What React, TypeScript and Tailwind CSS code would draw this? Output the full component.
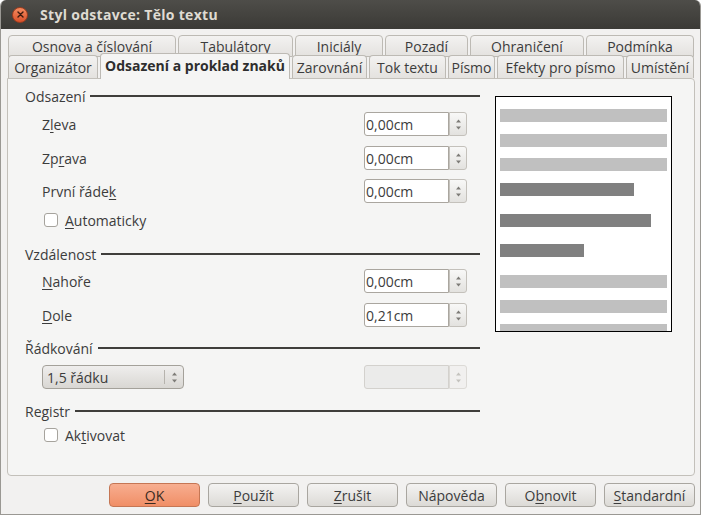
import React from "react";

const row1 = [
  { label: "Osnova a číslování", w: "w-[168px]" },
  { label: "Tabulátory", w: "w-[115px]" },
  { label: "Iniciály", w: "w-[88px]" },
  { label: "Pozadí", w: "w-[83px]" },
  { label: "Ohraničení", w: "w-[114px]" },
  { label: "Podmínka", w: "w-[108px]" },
];

const row2 = [
  { label: "Organizátor", w: "w-[90px]" },
  { label: "Odsazení a proklad znaků", w: "w-[190px]", active: true },
  { label: "Zarovnání", w: "w-[75px]" },
  { label: "Tok textu", w: "w-[77px]" },
  { label: "Písmo", w: "w-[47px]" },
  { label: "Efekty pro písmo", w: "w-[127px]" },
  { label: "Umístění", w: "w-[68px]" },
];

const bars = [
  { w: "w-[167px]", dark: false, mt: "mt-0" },
  { w: "w-[167px]", dark: false, mt: "mt-[12px]" },
  { w: "w-[167px]", dark: false, mt: "mt-[11px]" },
  { w: "w-[134px]", dark: true, mt: "mt-[12px]" },
  { w: "w-[151px]", dark: true, mt: "mt-[18px]" },
  { w: "w-[84px]", dark: true, mt: "mt-[17px]" },
  { w: "w-[167px]", dark: false, mt: "mt-[18px]" },
  { w: "w-[167px]", dark: false, mt: "mt-[12px]" },
  { w: "w-[167px]", dark: false, mt: "mt-[11px]" },
];

function Arrows({ faded }: { faded?: boolean }) {
  const c = faded ? "#c4c2be" : "#7d7b77";
  return (
    <svg width="7" height="13" viewBox="0 0 7 13">
      <path d="M3.5 1.5 L6 4.5 L1 4.5 Z" fill={c} />
      <path d="M3.5 11.5 L6 8.5 L1 8.5 Z" fill={c} />
    </svg>
  );
}

function Spin({ value, disabled }: { value?: string; disabled?: boolean }) {
  return (
    <div className="flex w-[103px] h-[24px]">
      <div
        className={
          disabled
            ? "w-[85px] h-full border border-[#d3d1cd] bg-[#ebebea] rounded-l-[3px]"
            : "w-[85px] h-full border border-[#aaa69f] bg-white rounded-l-[3px] flex items-center pl-[1px] text-[#3c3c3c]"
        }
      >
        {value}
      </div>
      <div
        className={
          disabled
            ? "w-[18px] h-full border border-[#dcdad6] rounded-r-[3px] bg-[#f1f0ef] flex items-center justify-center"
            : "w-[18px] h-full border border-[#c4c1bb] rounded-r-[3px] bg-gradient-to-b from-[#f8f8f7] to-[#e3e2df] flex items-center justify-center"
        }
      >
        <Arrows faded={disabled} />
      </div>
    </div>
  );
}

function Heading({ text }: { text: string }) {
  return (
    <div className="flex items-center h-[18px]">
      <span>{text}</span>
      <div className="flex-1 h-[2px] bg-[#3f3e3b] ml-[5px]" />
    </div>
  );
}

function Field({ label, value, mt }: { label: React.ReactNode; value: string; mt: string }) {
  return (
    <div className={`flex items-center justify-between h-[24px] pl-[17px] pr-[13px] ${mt}`}>
      <span>{label}</span>
      <Spin value={value} />
    </div>
  );
}

function Check({ label, mt }: { label: React.ReactNode; mt: string }) {
  return (
    <div className={`flex items-center h-[18px] pl-[19px] ${mt}`}>
      <div className="w-[14px] h-[14px] rounded-[3px] border border-[#a6a39d] bg-white" />
      <span className="ml-[7px]">{label}</span>
    </div>
  );
}

function Btn({ children, primary }: { children: React.ReactNode; primary?: boolean }) {
  return (
    <div
      className={
        primary
          ? "w-[91px] h-[24px] rounded-[4px] border border-[#c57654] bg-gradient-to-b from-[#f7ae90] to-[#f08e66] flex items-center justify-center text-[#3a2a22]"
          : "w-[91px] h-[24px] rounded-[4px] border border-[#a9a6a0] bg-gradient-to-b from-[#f4f3f2] to-[#dcdad6] flex items-center justify-center"
      }
    >
      {children}
    </div>
  );
}

const U = ({ c }: { c: string }) => <span className="underline underline-offset-2">{c}</span>;

export default function App() {
  return (
    <div className="w-[701px] h-[515px] bg-[#f2f1f0] flex flex-col font-['Open_Sans',sans-serif] text-[14px] text-[#3c3c3c] border-x border-b border-[#9a9893] rounded-t-[6px] overflow-hidden">
      {/* title bar */}
      <div className="h-[29px] shrink-0 bg-gradient-to-b from-[#4e4d49] to-[#3b3a36] flex items-center pl-[11px]">
        <div className="w-[16px] h-[16px] rounded-full bg-gradient-to-b from-[#f48a5e] to-[#d9502a] border border-[#9e3d1f] flex items-center justify-center">
          <svg width="7" height="7" viewBox="0 0 7 7">
            <path d="M1 1 L6 6 M6 1 L1 6" stroke="#3b1a0e" strokeWidth="1.4" strokeLinecap="round" />
          </svg>
        </div>
        <span className="ml-[12px] text-[14px] font-bold text-[#dfdbd2] tracking-[0.3px]">Styl odstavce: Tělo textu</span>
      </div>

      <div className="flex flex-col pl-[6px]">
        {/* tab row 1 */}
        <div className="flex gap-[2px] pl-[1px] mt-[6px] h-[20px] items-start">
          {row1.map((t) => (
            <div
              key={t.label}
              className={`${t.w} h-[22px] rounded-t-[4px] border border-[#bdbab4] bg-gradient-to-b from-[#f3f2f1] to-[#e4e2df] flex items-center justify-center`}
            >
              {t.label}
            </div>
          ))}
        </div>
        {/* tab row 2 */}
        <div className="relative z-10 flex gap-[2px] pl-[1px] h-[23px] items-end">
          {row2.map((t) =>
            t.active ? (
              <div
                key={t.label}
                className={`${t.w} h-[26px] -mb-[1px] rounded-t-[4px] border border-b-0 border-[#bdbab4] bg-[#f5f5f4] flex items-center justify-center font-bold text-[#2e2e2e] pb-[2px]`}
              >
                {t.label}
              </div>
            ) : (
              <div
                key={t.label}
                className={`${t.w} h-[23px] rounded-t-[4px] border border-b-0 border-[#bdbab4] bg-gradient-to-b from-[#f3f2f1] to-[#e4e2df] flex items-center justify-center whitespace-nowrap`}
              >
                {t.label}
              </div>
            )
          )}
        </div>

        {/* panel */}
        <div className="w-[688px] h-[398px] border border-[#c3c0ba] rounded-b-[4px] rounded-tr-[4px] bg-[#f5f5f4] flex">
          <div className="w-[472px] pl-[17px] pt-[8px] flex flex-col">
            <Heading text="Odsazení" />
            <Field label={<>Z<U c="l" />eva</>} value="0,00cm" mt="mt-[7px]" />
            <Field label={<>Zp<U c="r" />ava</>} value="0,00cm" mt="mt-[10px]" />
            <Field label={<>První řáde<U c="k" /></>} value="0,00cm" mt="mt-[9px]" />
            <Check label={<><U c="A" />utomaticky</>} mt="mt-[8px]" />

            <div className="mt-[16px]">
              <Heading text="Vzdálenost" />
            </div>
            <Field label={<><U c="N" />ahoře</>} value="0,00cm" mt="mt-[6px]" />
            <Field label={<><U c="D" />ole</>} value="0,21cm" mt="mt-[10px]" />

            <div className="mt-[12px]">
              <Heading text="Řádkování" />
            </div>
            <div className="flex items-center justify-between h-[24px] pl-[17px] pr-[13px] mt-[8px]">
              <div className="w-[142px] h-[24px] rounded-[4px] border border-[#a4a19a] bg-gradient-to-b from-[#efeeed] to-[#d9d7d3] flex items-center">
                <span className="flex-1 pl-[4px]">1,5 řádku</span>
                <div className="w-[1px] h-[14px] bg-[#b6b3ad]" />
                <div className="w-[18px] flex items-center justify-center">
                  <Arrows />
                </div>
              </div>
              <Spin disabled />
            </div>

            <div className="mt-[13px]">
              <Heading text="Registr" />
            </div>
            <Check label={<>Ak<U c="t" />ivovat</>} mt="mt-[6px]" />
          </div>

          <div className="ml-[15px] mt-[17px] w-[177px] h-[236px] border border-black bg-white pl-[4px] pt-[12px] overflow-hidden flex flex-col">
            {bars.map((b, i) => (
              <div
                key={i}
                className={`${b.w} ${b.mt} h-[13px] shrink-0 ${b.dark ? "bg-[#808080]" : "bg-[#c0c0c0]"}`}
              />
            ))}
          </div>
        </div>

        {/* buttons */}
        <div className="flex justify-end gap-[8px] w-[688px] mt-[7px]">
          <Btn primary><U c="O" />K</Btn>
          <Btn><U c="P" />oužít</Btn>
          <Btn><U c="Z" />rušit</Btn>
          <Btn>Nápověda</Btn>
          <Btn>O<U c="b" />novit</Btn>
          <Btn><U c="S" />tandardní</Btn>
        </div>
      </div>
    </div>
  );
}
